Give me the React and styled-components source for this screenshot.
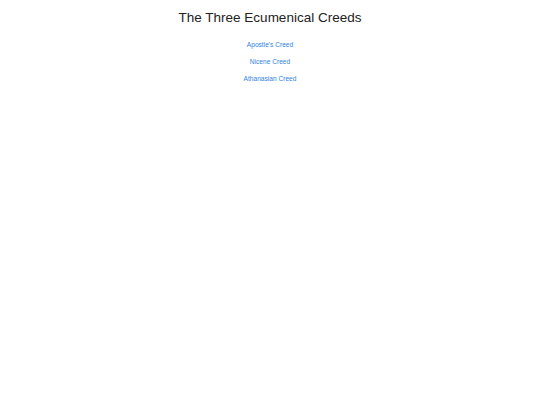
import React from "react";
import styled, { createGlobalStyle } from "styled-components";

const GlobalStyle = createGlobalStyle`
  body {
    margin: 0;
    background: #ffffff;
    font-family: "Liberation Sans", Arial, sans-serif;
  }
`;

const Page = styled.div`
  display: flex;
  flex-direction: column;
  align-items: center;
  padding-top: 9px;
`;

const Title = styled.h1`
  margin: 0 0 13px;
  font-size: 13.5px;
  font-weight: normal;
  color: #222222;
  line-height: 18px;
`;

const LinkList = styled.ul`
  list-style: none;
  margin: 0;
  padding: 0;
  display: flex;
  flex-direction: column;
  align-items: center;
  gap: 7px;
`;

const LinkItem = styled.li`
  font-size: 6.6px;
  line-height: 10px;
`;

const CreedLink = styled.a`
  color: #2f84df;
  text-decoration: none;
`;

const creeds = ["Apostle's Creed", "Nicene Creed", "Athanasian Creed"];

const App = () => {
  return (
    <Page>
      <GlobalStyle />
      <Title>The Three Ecumenical Creeds</Title>
      <LinkList>
        {creeds.map((c) => (
          <LinkItem key={c}>
            <CreedLink href="#">{c}</CreedLink>
          </LinkItem>
        ))}
      </LinkList>
    </Page>
  );
};

export default App;
